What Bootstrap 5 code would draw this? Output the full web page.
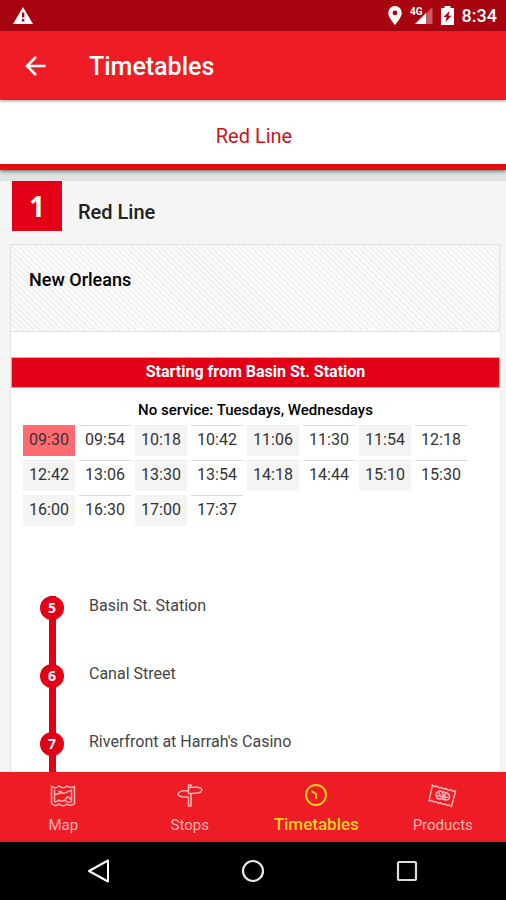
<!DOCTYPE html>
<html lang="en">
<head>
<meta charset="utf-8">
<meta name="viewport" content="width=device-width, initial-scale=1">
<title>Timetables</title>
<link href="https://cdn.jsdelivr.net/npm/bootstrap@5.3.0/dist/css/bootstrap.min.css" rel="stylesheet">
<style>
  :root { --line-red: #e30016; --bar-red: #ee1c25; }
  body { font-family: Roboto, "Liberation Sans", sans-serif; color: #222; background: #f5f5f5; }
  svg { display: block; flex: none; }
  .fw-mid { font-weight: 500; }
  .status-bar { height: 31px; background: #a8040f; font-size: 18px; line-height: 31px; padding: 0 9px 0 12px; gap: 8px; }
  .app-bar { height: 69px; background: var(--bar-red); padding: 0 24px; gap: 42px; box-shadow: 0 1px 3px rgba(0,0,0,.4); z-index: 2; }
  .app-bar h1 { font-size: 25px; line-height: 32px; padding-top: 3px; }
  .line-tab { height: 70px; border-bottom: 6px solid #e50d12; box-shadow: 0 1px 4px rgba(0,0,0,.6); z-index: 1; }
  .line-tab a { color: #cc1420; font-size: 20px; line-height: 24px; padding: 7px 0 0 2px; }
  .content-scroll { min-height: 0; scrollbar-width: none; border-top: 11px solid #e2e2e2; }
  .content-scroll::-webkit-scrollbar { display: none; }
  .line-number { width: 50px; height: 50px; background: var(--line-red); font: 700 28px/50px "Open Sans", sans-serif; }
  .line-head { padding: 0 12px 13px; gap: 16px; }
  .line-head h2 { font-size: 20px; line-height: 24px; padding-top: 11px; }
  .sheet { margin: 0 5px 0 10px; border-left: 1px solid #e2e2e2; border-right: 1px solid #eee; }
  .city { height: 88px; padding: 23px 18px; border: 1px solid #e2e2e2; border-left: 0;
    background: repeating-linear-gradient(45deg, #f1f1f1 0 2px, #fbfbfb 2px 4px); }
  .city h3 { font-size: 18px; line-height: 24px; }
  .banner { margin-top: 25px; height: 31px; border: 1px solid #f2a0a6; background: var(--line-red); font-size: 16px; line-height: 28px; }
  .note { font-size: 15px; line-height: 20px; margin-top: 12px; }
  .times { border-collapse: separate; border-spacing: 4px; margin: 1px 0 0 8px; width: 452px; table-layout: fixed; font-size: 16px; line-height: 24px; }
  .times td { height: 31px; padding: 0 0 2px; border-top: 1px solid #d9d9d9; text-align: center; vertical-align: middle; color: #333; }
  .times td:nth-child(odd) { background: #f4f4f4; border-top-color: #eee; }
  .times td.next-run { background: #ff6b70; border-top-color: #ff6b70; }
  .times td:empty { background: none; border-color: transparent; }
  .stops { margin-top: 66px; padding-left: 29px; }
  .stops li { height: 68px; gap: 25px; }
  .stop-track { width: 24px; background: linear-gradient(var(--line-red), var(--line-red)) center / 7px 100% no-repeat; }
  .stop-dot { display: block; width: 24px; height: 24px; background: var(--line-red); font: 700 14px/24px "Open Sans", sans-serif; }
  .stop-name { font-size: 16px; line-height: 20px; color: #444; }
  .tabs-bottom { height: 70px; background: var(--bar-red); z-index: 1; }
  .tabs-bottom a { color: #fab4b4; font-size: 15px; line-height: 20px; padding-top: 12px; gap: 7px; }
  .tabs-bottom a.active { color: #ffd21c; font-size: 17px; font-weight: 500; padding-top: 11px; }
  .system-bar { height: 58px; background: #000; padding: 0 22px; }
</style>
<script src="https://cdn.jsdelivr.net/npm/bootstrap@5.3.0/dist/js/bootstrap.bundle.min.js"></script>
</head>
<body class="vh-100 d-flex flex-column overflow-hidden">
  <div class="status-bar d-flex align-items-center text-white fw-mid flex-shrink-0">
    <svg class="me-auto" width="22" height="19" viewBox="0 0 22 19"><path d="M11 1 21 18H1z" fill="#fff"/><path d="M9.900 6.500h2.400v5H9.900zM9.900 13h2.400v2.400H9.900z" fill="#a8040f"/></svg>
    <svg width="14" height="19" viewBox="0 0 14 19"><path fill="#fff" fill-rule="evenodd" d="M7 0a6.800 6.800 0 0 0-6.800 6.800C.2 11.600 7 19 7 19s6.800-7.400 6.800-12.200A6.800 6.800 0 0 0 7 0zm0 4.500a2.400 2.400 0 1 1 0 4.800 2.400 2.400 0 0 1 0-4.800z"/></svg>
    <svg width="23" height="19" viewBox="0 0 23 19"><path d="M16 7.500 22.500 1v17H16z" fill="#cb5c64"/><path d="M16 7v11H5z" fill="#fff"/><text x="0" y="9" font-family="Roboto, sans-serif" font-size="10" font-weight="700" fill="#fff">4G</text></svg>
    <svg width="13" height="19" viewBox="0 0 13 19"><path fill="#fff" d="M3.500 2V0h6v2H13v17H0V2z"/><path fill="#a8040f" d="m8.500 5-6 6h3L4.500 16l6-6.300h-3z"/></svg>
    <span>8:34</span>
  </div>
  <header class="app-bar d-flex align-items-center text-white position-relative flex-shrink-0">
    <button type="button" class="btn p-0 border-0 text-white" aria-label="Back">
      <svg width="23" height="22" viewBox="0 0 23 22" fill="none" stroke="#fff" stroke-width="2.600"><path d="M21.500 11H4M12 2l-9 9 9 9"/></svg>
    </button>
    <h1 class="fw-mid m-0">Timetables</h1>
  </header>
  <nav class="line-tab bg-white d-flex align-items-center justify-content-center position-relative flex-shrink-0" aria-label="Lines">
    <a href="#red-line" class="text-decoration-none">Red Line</a>
  </nav>
  <main class="content-scroll flex-grow-1 overflow-auto" id="red-line">
    <div class="line-head d-flex align-items-center">
      <div class="line-number text-white text-center">1</div>
      <h2 class="fw-mid m-0">Red Line</h2>
    </div>
    <section class="sheet bg-white">
      <div class="city"><h3 class="fw-mid m-0 text-black">New Orleans</h3></div>
      <div class="banner text-white text-center fw-bold">Starting from Basin St. Station</div>
      <p class="note text-center text-black fw-mid mb-0">No service: Tuesdays, Wednesdays</p>
      <table class="times" aria-label="Departure times">
        <tbody>
          <tr><td class="next-run">09:30</td><td>09:54</td><td>10:18</td><td>10:42</td><td>11:06</td><td>11:30</td><td>11:54</td><td>12:18</td></tr>
          <tr><td>12:42</td><td>13:06</td><td>13:30</td><td>13:54</td><td>14:18</td><td>14:44</td><td>15:10</td><td>15:30</td></tr>
          <tr><td>16:00</td><td>16:30</td><td>17:00</td><td>17:37</td><td></td><td></td><td></td><td></td></tr>
        </tbody>
      </table>
      <ol class="stops list-unstyled mb-0">
        <li class="d-flex"><span class="stop-track"><span class="stop-dot rounded-circle text-white text-center">5</span></span><span class="stop-name">Basin St. Station</span></li>
        <li class="d-flex"><span class="stop-track"><span class="stop-dot rounded-circle text-white text-center">6</span></span><span class="stop-name">Canal Street</span></li>
        <li class="d-flex"><span class="stop-track"><span class="stop-dot rounded-circle text-white text-center">7</span></span><span class="stop-name">Riverfront at Harrah's Casino</span></li>
      </ol>
    </section>
  </main>
  <nav class="tabs-bottom row g-0 flex-shrink-0 position-relative" aria-label="Main">
    <a href="#map" class="col d-flex flex-column align-items-center text-decoration-none">
      <svg width="26" height="24" viewBox="0 0 26 24" fill="none" stroke="currentColor" stroke-width="1.500"><path d="M1.500 2.500C5 4.500 6.500 4 9 2c3 2.500 5.500 2.500 8 0 2.500 2 4.500 2 7.500.5v17c-3 2.500-5 2.500-7.500.5-2.500 2.500-5 2.500-8 0-2.500 2.500-5 2-7.500-.5z"/><path d="M4.500 5.500v12c2 1 3 0 4.500-1.500 2 1.800 4 1.500 5.500 0 2 2.300 4 3 7 1.500v-12M5 10c3 1 5-2 8-1s4-2 8-2.500M8 7.500h4M16 15.500c0-3.500 4-3.500 4 0"/></svg>
      <span>Map</span>
    </a>
    <a href="#stops" class="col d-flex flex-column align-items-center text-decoration-none">
      <svg width="26" height="24" viewBox="0 0 26 24" fill="none" stroke="currentColor" stroke-width="1.500" stroke-linejoin="round"><path d="M11.500 3.500V1H14v2l7 .2c2 .3 3.500 1.500 4 2.800-.8 1.800-2 2.800-4 3l-7 .5V22h-2.500v-9l-6.500-.2C3 12.500 1.500 11.500 1 10c.8-1.800 2-2.800 4-3l6.500-.5V3.500H14M11.500 6.500v3H14"/></svg>
      <span>Stops</span>
    </a>
    <a href="#timetables" class="active col d-flex flex-column align-items-center text-decoration-none" aria-current="page">
      <svg width="24" height="24" viewBox="0 0 24 24" fill="none" stroke="currentColor" stroke-width="1.900"><circle cx="12" cy="12" r="10"/><path d="M7.500 8.500c1.500 0 2.500 1.500 4.500 2.300V16"/></svg>
      <span>Timetables</span>
    </a>
    <a href="#products" class="col d-flex flex-column align-items-center text-decoration-none">
      <svg width="29" height="24" viewBox="0 0 29 24" fill="none" stroke="currentColor" stroke-width="1.500"><path d="m4.500 1 2 1.500 2.500-.3 2 1.500 2.500-.2 2 1.300 2.500-.2 2 1.300 2.500-.1 2 1.300 3 .2-4 15.200-2-1.400-2.500.2-2-1.300-2.500.2-2-1.400-2.500.2-2-1.300-2.500.1-2-1.300-2.500.1z"/><path d="M8 11c0-3 3-5 6-3.500l5 1.500c3 1.500 3 4 1.500 6.500l-3 .5-5-1.500-3 .5zM11 8l1.500 5M14 8l3 7.500M18 9.500 14 14M9 11.500l11 2"/></svg>
      <span>Products</span>
    </a>
  </nav>
  <div class="system-bar row g-0 align-items-center flex-shrink-0">
    <div class="col d-flex justify-content-center"><svg width="24" height="24" viewBox="0 0 24 24" fill="none" stroke="#fff" stroke-width="2"><path d="M21 1.500v21L2 12z" stroke-linejoin="round"/></svg></div>
    <div class="col d-flex justify-content-center"><svg width="24" height="24" viewBox="0 0 24 24" fill="none" stroke="#e8e8e8" stroke-width="2.200"><circle cx="12" cy="12" r="10"/></svg></div>
    <div class="col d-flex justify-content-center"><svg width="22" height="22" viewBox="0 0 22 22" fill="none" stroke="#ddd" stroke-width="2.200"><rect x="2" y="2" width="18" height="18" rx="1"/></svg></div>
  </div>
</body>
</html>
